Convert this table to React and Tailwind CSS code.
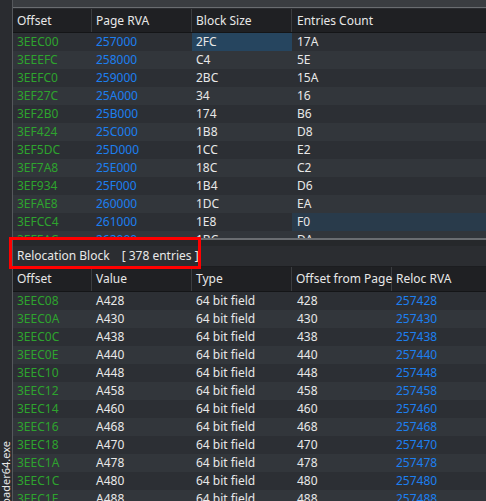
const blocks = [
  ["3EEC00", "257000", "2FC", "17A"],
  ["3EEEFC", "258000", "C4", "5E"],
  ["3EEFC0", "259000", "2BC", "15A"],
  ["3EF27C", "25A000", "34", "16"],
  ["3EF2B0", "25B000", "174", "B6"],
  ["3EF424", "25C000", "1B8", "D8"],
  ["3EF5DC", "25D000", "1CC", "E2"],
  ["3EF7A8", "25E000", "18C", "C2"],
  ["3EF934", "25F000", "1B4", "D6"],
  ["3EFAE8", "260000", "1DC", "EA"],
  ["3EFCC4", "261000", "1E8", "F0"],
  ["3EFEAC", "262000", "1BC", "DA"],
];

const offs = ["428", "430", "438", "440", "448", "458", "460", "468", "470", "478", "480", "488"];
const relocs = offs.map((o, i) => [
  (0x3eec08 + i * 2).toString(16).toUpperCase(),
  "A" + o,
  "64 bit field",
  o,
  "257" + o,
]);

const HeaderCell = ({ children, w }) => (
  <div className={`${w} h-full flex items-center pl-[4px] border-r border-[#3b3d40] shrink-0 whitespace-nowrap`}>
    {children}
  </div>
);

const App = () => {
  return (
    <div
      className="relative w-[486px] h-[501px] overflow-hidden flex bg-[#2b2d31] text-[12px] text-[#e8e8e8]"
      style={{ fontFamily: '"Noto Sans", "Open Sans", sans-serif' }}
    >
      {/* side tab strip */}
      <div className="relative w-[13px] shrink-0 bg-[#2a2c30] border-r border-[#55585c]">
        <div className="absolute left-[-1px] top-[441px] [writing-mode:vertical-rl] rotate-180 whitespace-nowrap leading-[13px] text-[11px] text-[#e8e8e8]">
          loader64.exe
        </div>
      </div>

      <div className="flex-1 flex flex-col min-w-0">
        <div className="h-[8px] shrink-0 bg-[#3a3d41] border-b border-[#6a6d71]" />

        {/* blocks table */}
        <div className="h-[230px] shrink-0 flex flex-col overflow-hidden">
          <div className="h-[25px] shrink-0 flex bg-[#1f2023] border-b border-[#141517] border-t border-t-[#2a2c30]">
            <HeaderCell w="w-[79px]">Offset</HeaderCell>
            <HeaderCell w="w-[100px]">Page RVA</HeaderCell>
            <HeaderCell w="w-[100px]">Block Size</HeaderCell>
            <div className="flex-1 h-full flex items-center pl-[5px]">Entries Count</div>
          </div>
          {blocks.map((r, i) => (
            <div
              key={r[0]}
              className={`h-[18px] shrink-0 flex items-center ${i % 2 ? "bg-[#32363b]" : "bg-[#2c2f34]"}`}
            >
              <div className="w-[79px] pl-[4px] text-[#2ea32e]">{r[0]}</div>
              <div className="w-[100px] pl-[4px] text-[#1c7ff0]">{r[1]}</div>
              <div className={`w-[100px] h-full flex items-center pl-[4px] ${i === 0 ? "bg-[#26455f]" : ""}`}>{r[2]}</div>
              <div className={`flex-1 h-full flex items-center pl-[5px] ${i === 10 ? "bg-[#293b4b]" : ""}`}>{r[3]}</div>
            </div>
          ))}
        </div>

        <div className="h-[2px] shrink-0 bg-[#6a6d71]" />
        <div className="h-[6px] shrink-0 bg-[#26282b]" />

        {/* label */}
        <div className="h-[21px] shrink-0 flex items-center pl-[4px] bg-[#2b2d31] border-b border-[#1c1d20]">
          <span>Relocation Block</span>
          <span className="ml-[12px]">[ 378 entries ]</span>
        </div>

        {/* relocations table */}
        <div className="flex-1 flex flex-col overflow-hidden">
          <div className="h-[25px] shrink-0 flex bg-[#1f2023] border-b border-[#141517]">
            <HeaderCell w="w-[79px]">Offset</HeaderCell>
            <HeaderCell w="w-[100px]">Value</HeaderCell>
            <HeaderCell w="w-[100px]">Type</HeaderCell>
            <HeaderCell w="w-[100px]">Offset from Page</HeaderCell>
            <div className="flex-1 h-full flex items-center pl-[4px]">Reloc RVA</div>
          </div>
          {relocs.map((r, i) => (
            <div
              key={r[0]}
              className={`h-[18px] shrink-0 flex items-center ${i % 2 ? "bg-[#32363b]" : "bg-[#2c2f34]"}`}
            >
              <div className="w-[79px] pl-[4px] text-[#2ea32e]">{r[0]}</div>
              <div className="w-[100px] pl-[4px]">{r[1]}</div>
              <div className="w-[100px] pl-[4px]">{r[2]}</div>
              <div className="w-[100px] pl-[5px]">{r[3]}</div>
              <div className="flex-1 pl-[4px] text-[#1c7ff0]">{r[4]}</div>
            </div>
          ))}
        </div>
      </div>

      {/* highlight box */}
      <div className="absolute left-[9px] top-[237px] w-[192px] h-[32px] border-[3px] border-[#ff0000] pointer-events-none" />
    </div>
  );
};

export default App;
